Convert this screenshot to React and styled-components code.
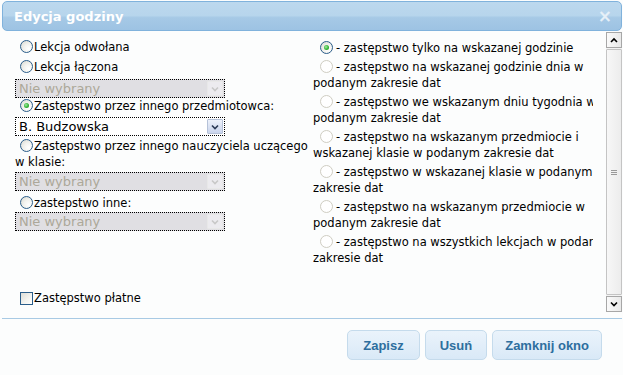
import React from "react";
import styled, { createGlobalStyle } from "styled-components";

const GlobalStyle = createGlobalStyle`
  html, body {
    margin: 0;
    padding: 0;
    background: #fcfdfd;
  }
  body {
    font-family: "DejaVu Sans", Verdana, sans-serif;
    font-size: 11.5px;
    color: #000;
  }
`;

const Dialog = styled.div`
  width: 623px;
  height: 375px;
  display: flex;
  flex-direction: column;
  overflow: hidden;
  background: #fcfdfd;
`;

const TitleBar = styled.div`
  margin: 1px 1px 0 2px;
  height: 30px;
  box-sizing: border-box;
  border: 1px solid #80b2dc;
  border-radius: 5px;
  background: linear-gradient(to bottom, #bcd8ee 0%, #b7d5ec 48%, #a6c9e6 56%, #9dc3e3 100%);
  display: flex;
  align-items: center;
  justify-content: space-between;
  padding: 0 9px 0 11px;
`;

const Title = styled.span`
  font-family: "DejaVu Sans", Verdana, sans-serif;
  font-weight: bold;
  font-size: 13px;
  color: #fff;
`;

const Close = styled.span`
  color: #e6f0f8;
  font-family: "DejaVu Sans", Verdana, sans-serif;
  font-weight: bold;
  font-size: 17px;
  line-height: 1;
`;

const Body = styled.div`
  display: flex;
  height: 280px;
  margin-top: 1px;
`;

const Panel = styled.div`
  flex: 1;
  display: flex;
  flex-direction: column;
  overflow: hidden;
  padding-bottom: 6px;
  box-sizing: border-box;
`;

const Columns = styled.div`
  display: flex;
`;

const LeftCol = styled.div`
  width: 298px;
  flex-shrink: 0;
  padding: 7px 0 0 15px;
  display: flex;
  flex-direction: column;
  align-items: flex-start;
`;

const RightCol = styled.div`
  width: 280px;
  flex-shrink: 0;
  padding-top: 6px;
  overflow: hidden;
`;

const Row = styled.div`
  margin-top: ${p => p.$mt || 0}px;
  line-height: 16px;
`;

const Option = styled.div`
  width: 310px;
  line-height: 16px;
  padding: 2px 0 1px;
`;

const Radio = styled.span`
  display: inline-block;
  width: 13px;
  height: 13px;
  box-sizing: border-box;
  border-radius: 50%;
  border: 1px solid ${p => (p.$disabled ? "#cfcdc2" : "#2a5d8a")};
  background: ${p =>
    p.$disabled
      ? "#fff"
      : "radial-gradient(circle at 70% 70%, #ffffff 0%, #f2f2ee 45%, #d6d6ce 100%)"};
  margin: 0 ${p => p.$gapR || 1}px 0 ${p => p.$gapL || 5}px;
  vertical-align: -2px;
  position: relative;

  &::after {
    content: "";
    display: ${p => (p.$checked ? "block" : "none")};
    position: absolute;
    left: 3px;
    top: 3px;
    width: 5px;
    height: 5px;
    border-radius: 50%;
    background: radial-gradient(circle at 40% 40%, #a4eaa4 0%, #34b534 55%, #1f8f1f 100%);
  }
`;

const Select = styled.div`
  width: 210px;
  height: 19px;
  box-sizing: border-box;
  margin-top: ${p => p.$mt || 0}px;
  border: 1px dotted #000;
  background: ${p => (p.$disabled ? "#e0dfe3" : "#fff")};
  display: flex;
  align-items: center;
  justify-content: space-between;
  padding: 0 1px 0 3px;
  font-size: 13px;
  color: ${p => (p.$disabled ? "#aca899" : "#000")};
`;

const Arrow = styled.span`
  width: 16px;
  height: 15px;
  box-sizing: border-box;
  border: 1px solid ${p => (p.$disabled ? "#e8e8e8" : "#b6c2d8")};
  background: ${p =>
    p.$disabled ? "#ecebef" : "linear-gradient(to bottom, #eef2fb, #c9d4ec)"};
  display: flex;
  align-items: center;
  justify-content: center;
  border-radius: 1px;
`;

const Chevron = ({ up, color = "#000" }) => (
  <svg width="8" height="6" viewBox="0 0 8 6">
    <path
      d={up ? "M1 5 L4 2 L7 5" : "M1 1.5 L4 4.5 L7 1.5"}
      fill="none"
      stroke={color}
      strokeWidth="1.6"
    />
  </svg>
);

const PaidRow = styled.div`
  margin-top: auto;
  padding-left: 20px;
  line-height: 15px;
  display: flex;
  align-items: center;
`;

const Check = styled.span`
  width: 13px;
  height: 13px;
  box-sizing: border-box;
  border: 1px solid #2a5d8a;
  background: linear-gradient(135deg, #dcdcd6 0%, #f4f4f0 60%, #fff 100%);
  margin-right: 1px;
`;

const ScrollBar = styled.div`
  width: 16px;
  margin-right: 1px;
  display: flex;
  flex-direction: column;
  background: #f3f3f3;
`;

const ScrollBtn = styled.div`
  height: 16px;
  box-sizing: border-box;
  border: 1px solid #a7a7a7;
  background: linear-gradient(to right, #fafafa, #e9e9e9);
  display: flex;
  align-items: center;
  justify-content: center;
`;

const Thumb = styled.div`
  flex: 1;
  margin: 1px 0;
  border: 1px solid #c4c4c4;
  border-radius: 1px;
  background: linear-gradient(to right, #f7f7f7, #ececec);
  display: flex;
  align-items: center;
  justify-content: center;
`;

const Grip = styled.span`
  width: 6px;
  height: 5px;
  border-top: 1px solid #9a9a9a;
  border-bottom: 1px solid #9a9a9a;
  box-sizing: border-box;
  background: linear-gradient(#9a9a9a, #9a9a9a) center / 100% 1px no-repeat;
`;

const Separator = styled.div`
  margin: 6px 1px 0 2px;
  border-top: 1px solid #a8cae4;
`;

const ButtonPane = styled.div`
  display: flex;
  justify-content: flex-end;
  gap: 5px;
  padding: 11px 21px 0 0;
`;

const Button = styled.button`
  height: 30px;
  padding: 0 ${p => p.$pad || 14}px;
  border: 1px solid #c5dbec;
  border-radius: 5px;
  background: linear-gradient(to bottom, #eaf3fb 0%, #e2eef9 50%, #d9e9f7 100%);
  color: #2e6e9e;
  font-family: "Liberation Sans", Arial, sans-serif;
  font-weight: bold;
  font-size: 13px;
  cursor: pointer;
`;

const rightOptions = [
  "- zastępstwo tylko na wskazanej godzinie",
  "- zastępstwo na wskazanej godzinie dnia w podanym zakresie dat",
  "- zastępstwo we wskazanym dniu tygodnia w podanym zakresie dat",
  "- zastępstwo na wskazanym przedmiocie i wskazanej klasie w podanym zakresie dat",
  "- zastępstwo w wskazanej klasie w podanym zakresie dat",
  "- zastępstwo na wskazanym przedmiocie w podanym zakresie dat",
  "- zastępstwo na wszystkich lekcjach w podanym zakresie dat",
];

export default function App() {
  return (
    <Dialog>
      <GlobalStyle />
      <TitleBar>
        <Title>Edycja godziny</Title>
        <Close>×</Close>
      </TitleBar>
      <Body>
        <Panel>
          <Columns>
            <LeftCol>
              <Row>
                <Radio />Lekcja odwołana
              </Row>
              <Row $mt={4}>
                <Radio />Lekcja łączona
              </Row>
              <Select $disabled $mt={4}>
                Nie wybrany
                <Arrow $disabled>
                  <Chevron color="#c8c8c8" />
                </Arrow>
              </Select>
              <Row>
                <Radio $checked />Zastępstwo przez innego przedmiotowca:
              </Row>
              <Select $mt={3}>
                B. Budzowska
                <Arrow>
                  <Chevron color="#2b3a55" />
                </Arrow>
              </Select>
              <Row $mt={2}>
                <Radio />Zastępstwo przez innego nauczyciela uczącego w klasie:
              </Row>
              <Select $disabled $mt={2}>
                Nie wybrany
                <Arrow $disabled>
                  <Chevron color="#c8c8c8" />
                </Arrow>
              </Select>
              <Row $mt={4}>
                <Radio />zastepstwo inne:
              </Row>
              <Select $disabled $mt={1}>
                Nie wybrany
                <Arrow $disabled>
                  <Chevron color="#c8c8c8" />
                </Arrow>
              </Select>
            </LeftCol>
            <RightCol>
              {rightOptions.map((text, i) => (
                <Option key={i}>
                  <Radio $gapL={7} $gapR={3} $checked={i === 0} $disabled={i !== 0} />
                  {text}
                </Option>
              ))}
            </RightCol>
          </Columns>
          <PaidRow>
            <Check />Zastępstwo płatne
          </PaidRow>
        </Panel>
        <ScrollBar>
          <ScrollBtn>
            <Chevron up />
          </ScrollBtn>
          <Thumb>
            <Grip />
          </Thumb>
          <ScrollBtn>
            <Chevron />
          </ScrollBtn>
        </ScrollBar>
      </Body>
      <Separator />
      <ButtonPane>
        <Button $pad={15}>Zapisz</Button>
        <Button>Usuń</Button>
        <Button $pad={12}>Zamknij okno</Button>
      </ButtonPane>
    </Dialog>
  );
}
